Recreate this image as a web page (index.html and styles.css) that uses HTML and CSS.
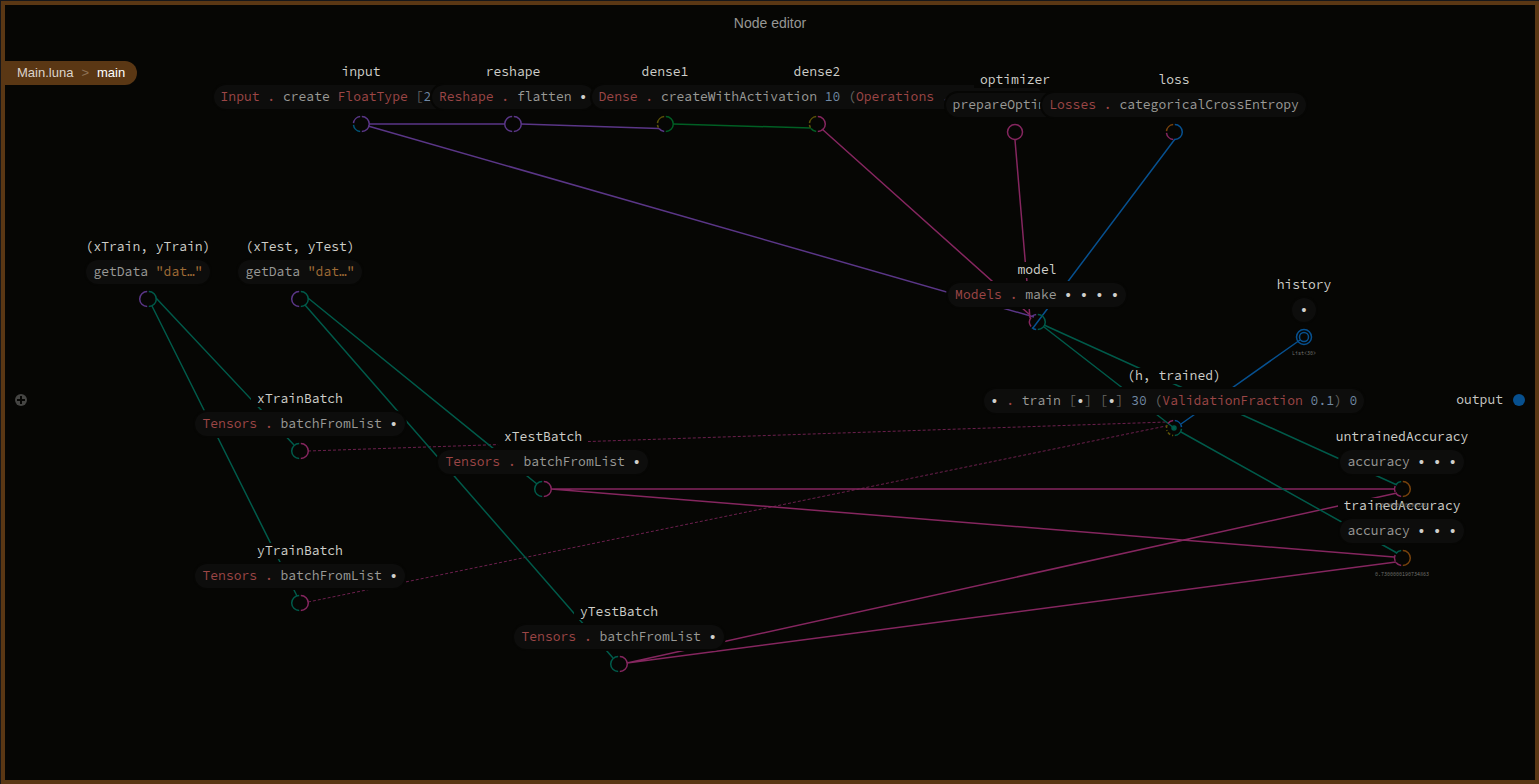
FILE: index.html
```html
<!DOCTYPE html>
<html lang="en">
<head>
<meta charset="utf-8">
<title>Node editor</title>
<link rel="stylesheet" href="styles.css">
</head>
<body>
<main class="editor">
  <svg class="links" aria-hidden="true">
    <defs>
      <path id="right" d="M.8 -7.5A7.5 7.5 0 0 1 .8 7.5"/>
      <path id="left" d="M-.8 -7.5A7.5 7.5 0 0 0 -.8 7.5"/>
      <path id="upper" d="M-.8 -7.5A7.5 7.5 0 0 0 -7.5 -.8"/>
      <path id="lower" d="M-7.5 .8A7.5 7.5 0 0 0 -.8 7.5"/>
      <path id="third-top" d="M-.8 -7.5A7.5 7.5 0 0 0 -6 -4.5"/>
      <path id="third-mid" d="M-6.9 -3A7.5 7.5 0 0 0 -6.9 3"/>
      <path id="third-low" d="M-6 4.5A7.5 7.5 0 0 0 -.8 7.5"/>
    </defs>
    <g class="purple">
      <path d="M369 124H505M521 124L659 128.5M368 126L1034 317"/>
    </g>
    <g class="green"><path d="M673 124L811 128"/></g>
    <g class="magenta">
      <path d="M822 129L1030 315M1015 140L1030 318"/>
      <path d="M551 489H1394M551 489L1394 557M627 663L1397 493M627 663L1396 562"/>
      <path class="dashed" d="M308 451L1167 422M308 602L1166 426"/>
    </g>
    <g class="blue"><path d="M1175 139L1033 328M1181 424L1300 340"/></g>
    <g class="teal">
      <path d="M156 298L294 445M152 306L297 596M308 298L537 484M305 305L613 658"/>
      <path d="M1044 327L1174 428M1044 325L1397 485M1181 432L1397 553"/>
      <circle class="dot" cx="1174" cy="428" r="2"/>
    </g>
    <g transform="translate(361 124)"><use href="#upper" class="purple"/><use href="#lower" class="cyan"/><use href="#right" class="purple"/></g>
    <g transform="translate(513 124)"><use href="#left" class="purple"/><use href="#right" class="purple"/></g>
    <g transform="translate(665 124)"><use href="#upper" class="olive"/><path class="olive" d="M-7.5 .8A7.5 7.5 0 0 0 -6.5 3.7"/><path class="purple" d="M-6 4.5A7.5 7.5 0 0 0 -.8 7.5"/><use href="#right" class="green"/></g>
    <g transform="translate(817 124)"><use href="#upper" class="olive"/><path class="olive" d="M-7.5 .8A7.5 7.5 0 0 0 -6.5 3.7"/><path class="green" d="M-6 4.5A7.5 7.5 0 0 0 -.8 7.5"/><use href="#right" class="magenta"/></g>
    <g transform="translate(1015 132)"><circle class="magenta" r="7.5"/></g>
    <g transform="translate(1174 132)"><use href="#upper" class="orange"/><use href="#lower" class="magenta"/><use href="#right" class="blue"/></g>
    <g transform="translate(1037 322)"><path class="purple" d="M-.8 -7.5A7.5 7.5 0 0 0 -5 -5.6"/><path class="magenta" d="M-6 -4.5A7.5 7.5 0 0 0 -6 4.5"/><path class="blue" d="M-5 5.6A7.5 7.5 0 0 0 -.8 7.5"/><use href="#right" class="teal"/></g>
    <g transform="translate(148 299)"><use href="#left" class="purple"/><use href="#right" class="teal"/></g>
    <g transform="translate(300 299)"><use href="#left" class="purple"/><use href="#right" class="teal"/></g>
    <g transform="translate(300 451)"><use href="#left" class="teal"/><use href="#right" class="magenta"/></g>
    <g transform="translate(300 603)"><use href="#left" class="teal"/><use href="#right" class="magenta"/></g>
    <g transform="translate(543 489)"><use href="#left" class="teal"/><use href="#right" class="magenta"/></g>
    <g transform="translate(619 664)"><use href="#left" class="teal"/><use href="#right" class="magenta"/></g>
    <g transform="translate(1174 428)"><use href="#third-top" class="magenta"/><use href="#third-mid" class="olive segmented"/><use href="#third-low" class="olive segmented"/><path class="blue" d="M.8 -7.5A7.5 7.5 0 0 1 7.5 -.8"/><path class="teal" d="M7.5 .8A7.5 7.5 0 0 1 .8 7.5"/></g>
    <g transform="translate(1304 337)" class="blue"><circle r="7.5"/><circle r="4.5"/></g>
    <g transform="translate(1402 489)"><use href="#third-top" class="teal"/><use href="#third-mid" class="magenta"/><use href="#third-low" class="magenta"/><use href="#right" class="orange"/></g>
    <g transform="translate(1402 558)"><use href="#third-top" class="teal"/><use href="#third-mid" class="magenta"/><use href="#third-low" class="magenta"/><use href="#right" class="orange"/></g>
  </svg>

  <section class="node input"><span class="name">input</span><code class="expr"><i class="type">Input .</i> create <i class="type">FloatType</i> <i class="punct">[</i><i class="num">28</i>, <i class="num">28</i>, <i class="num">1</i><i class="punct">]</i></code></section>
  <section class="node reshape"><span class="name">reshape</span><code class="expr"><i class="type">Reshape .</i> flatten <b>•</b></code></section>
  <section class="node dense1"><span class="name">dense1</span></section>
  <section class="node dense2"><span class="name">dense2</span><code class="expr"><i class="type">Dense .</i> createWithActivation <i class="num">10</i> <i class="punct">(</i><i class="type">Operations .</i> softmax<i class="punct">)</i> <b>•</b></code></section>
  <section class="node optimizer"><span class="name">optimizer</span><code class="expr">prepareOptimizer</code></section>
  <section class="node loss"><span class="name">loss</span><code class="expr"><i class="type">Losses .</i> categoricalCrossEntropy</code></section>
  <section class="node train-data"><span class="name">(xTrain, yTrain)</span><code class="expr">getData <i class="str">"dat…"</i></code></section>
  <section class="node test-data"><span class="name">(xTest, yTest)</span><code class="expr">getData <i class="str">"dat…"</i></code></section>
  <section class="node x-train"><span class="name">xTrainBatch</span><code class="expr"><i class="type">Tensors .</i> batchFromList <b>•</b></code></section>
  <section class="node y-train"><span class="name">yTrainBatch</span><code class="expr"><i class="type">Tensors .</i> batchFromList <b>•</b></code></section>
  <section class="node x-test"><span class="name">xTestBatch</span><code class="expr"><i class="type">Tensors .</i> batchFromList <b>•</b></code></section>
  <section class="node y-test"><span class="name">yTestBatch</span><code class="expr"><i class="type">Tensors .</i> batchFromList <b>•</b></code></section>
  <section class="node model"><span class="name">model</span><code class="expr"><i class="type">Models .</i> make <b>• • • •</b></code></section>
  <section class="node history"><span class="name">history</span><code class="expr"><b>•</b></code><output class="value">List&lt;30&gt;</output></section>
  <section class="node trained"><span class="name">(h, trained)</span><code class="expr"><b>•</b> <i class="type">.</i> train <i class="punct">[</i><b>•</b><i class="punct">]</i> <i class="punct">[</i><b>•</b><i class="punct">]</i> <i class="num">30</i> <i class="punct">(</i><i class="type">ValidationFraction</i> <i class="num">0.1</i><i class="punct">)</i> <i class="num">0</i></code></section>
  <section class="node trained-acc"><span class="name">trainedAccuracy</span><code class="expr">accuracy <b>• • •</b></code><output class="value">0.7300000190734863</output></section>
  <section class="node untrained-acc"><span class="name">untrainedAccuracy</span><code class="expr">accuracy <b>• • •</b></code><output class="value">0.0700000002980232</output></section>

  <header class="titlebar"><h1>Node editor</h1></header>
  <nav class="breadcrumb" aria-label="Location">
    <a href="#module">Main.luna</a><span class="sep">&gt;</span><a class="current" href="#main">main</a>
  </nav>

  <button class="add-port" type="button" aria-label="Add input">
    <svg viewBox="0 0 12 12"><circle cx="6" cy="6" r="6"/><path d="M6 2V10M2 6H10"/></svg>
  </button>
  <div class="output-port"><span>output</span><span class="socket"></span></div>
</main>
</body>
</html>
```

FILE: styles.css
```css
* { box-sizing: border-box; }

body {
  margin: 0;
  background: #17171a;
  color: #c8c8c4;
  font: 13px/16px "Liberation Sans", Arial, sans-serif;
}

.editor {
  position: relative;
  min-height: 100vh;
  overflow: hidden;
  background: #060604;
  border: 1px solid #17171a;
  border-width: 1px 0 0 1px;
}

.editor::after {
  content: "";
  position: absolute;
  inset: 0;
  border: 4px solid #5a3714;
  pointer-events: none;
}

.titlebar { padding: 14px 0; text-align: center; }
.titlebar h1 {
  margin: 0;
  font-size: 14px;
  line-height: 16px;
  font-weight: 400;
  color: #979794;
}

.breadcrumb {
  position: relative;
  display: flex;
  align-items: center;
  width: max-content;
  height: 24px;
  margin: 16px 0 0 4px;
  padding: 0 12px;
  border-radius: 0 12px 12px 0;
  background: #5a3714;
}
.breadcrumb a { color: #dcd4cb; text-decoration: none; }
.breadcrumb .current { color: #fff; }
.breadcrumb .sep { padding: 0 8px; color: #8f7356; }

/* wires and ports */
.links {
  position: absolute;
  top: -1px;
  left: -1px;
  width: 100%;
  height: 100%;
  overflow: visible;
  fill: none;
  stroke-width: 1.5px;
}
.purple { stroke: #5a3687; }
.green { stroke: #005f24; }
.magenta { stroke: #85265f; }
.blue { stroke: #07508f; }
.teal { stroke: #005a4a; }
.cyan { stroke: #00567a; }
.olive { stroke: #5b5208; }
.orange { stroke: #77420c; }
.dashed { stroke-width: 1px; stroke-dasharray: 3 2; opacity: .8; }
.segmented { stroke-dasharray: 3 2; }
.dot { fill: #005f4e; }

/* nodes */
.node {
  position: absolute;
  display: flex;
  flex-direction: column;
  align-items: center;
  width: 0;
  font: 13px/16px "Source Code Pro", "Liberation Mono", monospace;
  white-space: pre;
}
.name { padding: 0 6px; background: #060604; color: #cfcfca; }
.expr {
  margin-top: 5px;
  padding: 4px 7px;
  border-radius: 12px;
  background: #0d0d0c;
  box-shadow: 0 0 0 2px #060604;
  color: #9a9a97;
  font: inherit;
}
.expr i { font-style: normal; }
.expr b { font-weight: 400; color: #d0d0cc; }
.type { color: #9c4646; }
.num { color: #7189a4; }
.str { color: #a06c36; }
.punct { color: #666663; }
.value { margin-top: 27px; font-size: 5px; line-height: 8px; color: #777773; }

.input { left: 360px; top: 63px; }
.reshape { left: 512px; top: 63px; }
.dense1 { left: 664px; top: 63px; }
.dense2 { left: 816px; top: 63px; }
.optimizer { left: 1014px; top: 71px; }
.loss { left: 1173px; top: 71px; }
.train-data { left: 147px; top: 238px; }
.test-data { left: 299px; top: 238px; }
.x-train { left: 299px; top: 390px; }
.y-train { left: 299px; top: 542px; }
.x-test { left: 542px; top: 428px; }
.y-test { left: 618px; top: 603px; }
.model { left: 1036px; top: 261px; }
.history { left: 1303px; top: 276px; }
.trained { left: 1173px; top: 367px; }
.untrained-acc { left: 1401px; top: 428px; }
.trained-acc { left: 1401px; top: 497px; }

.history .expr { padding: 4px 8px; }

.add-port {
  position: absolute;
  top: 393px;
  left: 14px;
  width: 12px;
  height: 12px;
  padding: 0;
  border: 0;
  background: none;
}
.add-port svg { display: block; }
.add-port circle { fill: #454543; }
.add-port path { stroke: #060604; stroke-width: 2; }

.output-port {
  position: absolute;
  top: 391px;
  right: 14px;
  display: flex;
  align-items: center;
  gap: 10px;
  font: 13px/16px "Source Code Pro", "Liberation Mono", monospace;
}
.socket { width: 12px; height: 12px; border-radius: 50%; background: #07508f; }
```
